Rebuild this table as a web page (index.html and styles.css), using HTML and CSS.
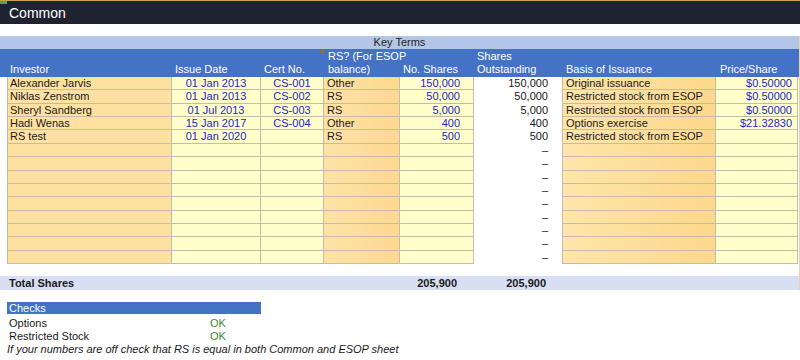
FILE: index.html
```html
<!DOCTYPE html>
<html lang="en">
<head>
<meta charset="utf-8">
<title>Common</title>
<link rel="stylesheet" href="styles.css">
</head>
<body>
<div class="titlebar"><span class="corner"></span><h1>Common</h1></div>
<div class="sheet">
  <div class="keyterms">Key Terms</div>
  <div class="row head">
    <div class="c inv">Investor</div>
    <div class="c date">Issue Date</div>
    <div class="c cert">Cert No.<span class="note"></span></div>
    <div class="c rs">RS? (For ESOP<br>balance)</div>
    <div class="c num">No. Shares</div>
    <div class="c out">Shares<br>Outstanding</div>
    <div class="c basis">Basis of Issuance</div>
    <div class="c price">Price/Share</div>
  </div>
  <div class="row data">
    <div class="c inv">Alexander Jarvis</div><div class="c date">01 Jan 2013</div><div class="c cert">CS-001</div><div class="c rs">Other</div><div class="c num">150,000</div><div class="c out">150,000</div><div class="c basis">Original issuance</div><div class="c price">$0.50000</div>
  </div>
  <div class="row data">
    <div class="c inv">Niklas Zenstrom</div><div class="c date">01 Jan 2013</div><div class="c cert">CS-002</div><div class="c rs">RS</div><div class="c num">50,000</div><div class="c out">50,000</div><div class="c basis">Restricted stock from ESOP</div><div class="c price">$0.50000</div>
  </div>
  <div class="row data">
    <div class="c inv">Sheryl Sandberg</div><div class="c date">01 Jul 2013</div><div class="c cert">CS-003</div><div class="c rs">RS</div><div class="c num">5,000</div><div class="c out">5,000</div><div class="c basis">Restricted stock from ESOP</div><div class="c price">$0.50000</div>
  </div>
  <div class="row data">
    <div class="c inv">Hadi Wenas</div><div class="c date">15 Jan 2017</div><div class="c cert">CS-004</div><div class="c rs">Other</div><div class="c num">400</div><div class="c out">400</div><div class="c basis">Options exercise</div><div class="c price">$21.32830</div>
  </div>
  <div class="row data">
    <div class="c inv">RS test</div><div class="c date">01 Jan 2020</div><div class="c cert"></div><div class="c rs">RS</div><div class="c num">500</div><div class="c out">500</div><div class="c basis">Restricted stock from ESOP</div><div class="c price"></div>
  </div>
  <div class="row data">
    <div class="c inv"></div><div class="c date"></div><div class="c cert"></div><div class="c rs"></div><div class="c num"></div><div class="c out">–</div><div class="c basis"></div><div class="c price"></div>
  </div>
  <div class="row data">
    <div class="c inv"></div><div class="c date"></div><div class="c cert"></div><div class="c rs"></div><div class="c num"></div><div class="c out">–</div><div class="c basis"></div><div class="c price"></div>
  </div>
  <div class="row data">
    <div class="c inv"></div><div class="c date"></div><div class="c cert"></div><div class="c rs"></div><div class="c num"></div><div class="c out">–</div><div class="c basis"></div><div class="c price"></div>
  </div>
  <div class="row data">
    <div class="c inv"></div><div class="c date"></div><div class="c cert"></div><div class="c rs"></div><div class="c num"></div><div class="c out">–</div><div class="c basis"></div><div class="c price"></div>
  </div>
  <div class="row data">
    <div class="c inv"></div><div class="c date"></div><div class="c cert"></div><div class="c rs"></div><div class="c num"></div><div class="c out">–</div><div class="c basis"></div><div class="c price"></div>
  </div>
  <div class="row data">
    <div class="c inv"></div><div class="c date"></div><div class="c cert"></div><div class="c rs"></div><div class="c num"></div><div class="c out">–</div><div class="c basis"></div><div class="c price"></div>
  </div>
  <div class="row data">
    <div class="c inv"></div><div class="c date"></div><div class="c cert"></div><div class="c rs"></div><div class="c num"></div><div class="c out">–</div><div class="c basis"></div><div class="c price"></div>
  </div>
  <div class="row data">
    <div class="c inv"></div><div class="c date"></div><div class="c cert"></div><div class="c rs"></div><div class="c num"></div><div class="c out">–</div><div class="c basis"></div><div class="c price"></div>
  </div>
  <div class="row data">
    <div class="c inv"></div><div class="c date"></div><div class="c cert"></div><div class="c rs"></div><div class="c num"></div><div class="c out">–</div><div class="c basis"></div><div class="c price"></div>
  </div>
  <div class="row total">
    <div class="c inv">Total Shares</div><div class="c date"></div><div class="c cert"></div><div class="c rs"></div><div class="c num">205,900</div><div class="c out">205,900</div><div class="c basis"></div><div class="c price"></div>
  </div>
</div>
<div class="checks">
  <div class="checks-bar">Checks</div>
  <div class="check"><span class="label">Options</span><span class="ok">OK</span></div>
  <div class="check"><span class="label">Restricted Stock</span><span class="ok">OK</span></div>
  <div class="hint">If your numbers are off check that RS is equal in both Common and ESOP sheet</div>
</div>
</body>
</html>
```

FILE: styles.css
```css
* { box-sizing: border-box; }

body {
  margin: 0;
  background: #ffffff;
  font-family: "Liberation Sans", Arial, sans-serif;
  font-size: 11px;
  color: #1a1a1a;
}

.titlebar {
  position: relative;
  height: 24px;
  border-top: 1px solid #c9a24a;
  background: #1f2330;
  display: flex;
  align-items: center;
  padding-left: 9px;
}

.titlebar h1 {
  margin: 0;
  font-size: 14px;
  font-weight: normal;
  color: #ffffff;
}

.corner {
  position: absolute;
  left: 0;
  top: 0;
  width: 7px;
  height: 3px;
  background: #6a9a62;
}

.sheet {
  margin-top: 12px;
  width: 800px;
  border-right: 1px solid #f1d1ad;
}

.keyterms {
  height: 13px;
  line-height: 13px;
  background: #b4c6e7;
  text-align: center;
  color: #222222;
}

.row {
  display: grid;
  grid-template-columns: 165px 89px 63px 76px 74px 89px 153px 82px;
  padding-left: 7px;
}

.c {
  white-space: nowrap;
  overflow: hidden;
}

/* header */
.head {
  height: 28px;
  background: #4472c4;
  color: #ffffff;
  align-items: end;
}

.head .c {
  line-height: 13px;
  padding: 0 0 1px 3px;
  position: relative;
  overflow: visible;
}

.head .rs { padding-left: 4px; }
.head .price { padding-left: 4px; }

.note {
  position: absolute;
  right: 0;
  top: -13px;
  width: 0;
  height: 0;
  border-top: 5px solid #a8652c;
  border-left: 5px solid transparent;
}

/* data rows */
.data {
  height: 13.36px;
}

.data .c {
  line-height: 13px;
  border-right: 1px solid #c4bca9;
  border-bottom: 1px solid #c4bca9;
}

.data .inv {
  border-left: 1px solid #c4bca9;
  background: #fee1a1;
  padding-left: 2px;
}

.data .date {
  background: #ffffcb;
  text-align: center;
  color: #2525cc;
}

.data .cert {
  background: #ffffcb;
  text-align: center;
  color: #2525cc;
}

.data .rs {
  background: linear-gradient(to right, #fee3a6, #fdd890);
  padding-left: 3px;
}

.data .num {
  background: #ffffcb;
  text-align: right;
  padding-right: 13px;
  color: #2525cc;
}

.data .out {
  background: #ffffff;
  border-bottom: none;
  text-align: right;
  padding-right: 14px;
}

.data .basis {
  background: linear-gradient(to right, #fee5a9, #fcd88b);
  padding-left: 3px;
}

.data .price {
  background: #ffffcb;
  text-align: right;
  padding-right: 5px;
  color: #2525cc;
}

/* totals */
.total {
  margin-top: 12px;
  height: 14px;
  background: #d9dff2;
  font-weight: bold;
  line-height: 14px;
}

.total .inv { padding-left: 2px; }
.total .num { text-align: right; padding-right: 17px; }
.total .out { text-align: right; padding-right: 17px; }

/* checks */
.checks {
  margin-top: 12px;
  padding-left: 7px;
}

.checks-bar {
  width: 254px;
  height: 12px;
  line-height: 12px;
  background: #4472c4;
  color: #ffffff;
  padding-left: 2px;
  margin-bottom: 2px;
}

.check {
  display: flex;
  height: 13px;
  line-height: 14px;
}

.check .label {
  width: 203px;
  padding-left: 2px;
}

.ok {
  color: #3a8a36;
}

.hint {
  font-style: italic;
  line-height: 14px;
}
```
